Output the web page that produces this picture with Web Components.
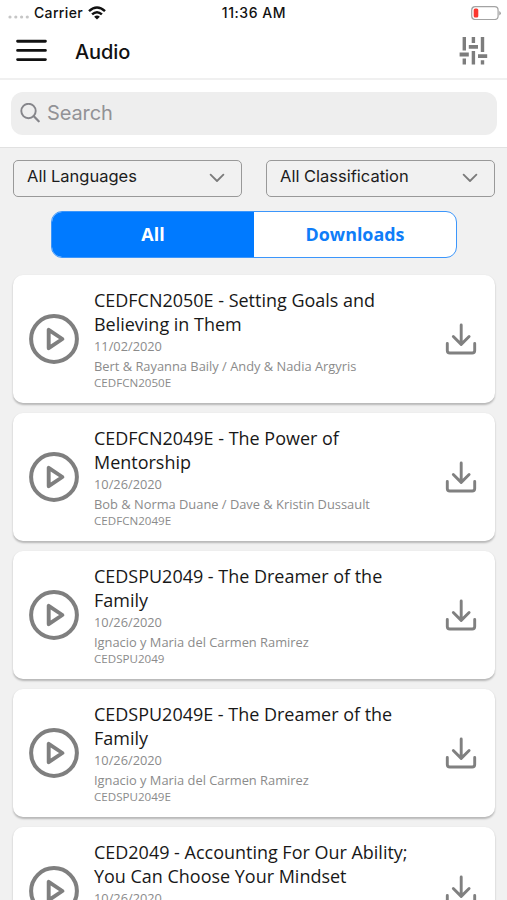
<!DOCTYPE html>
<html lang="en">
<head>
<meta charset="utf-8">
<title>Audio</title>
<style>
  html, body {
    margin: 0;
    height: 100%;
    overflow: hidden;
    background: #f1f1f1;
  }
</style>
</head>
<body>
<audio-app></audio-app>

<script>
function define(name, html) {
  const template = document.createElement('template');
  template.innerHTML = html;

  customElements.define(name, class extends HTMLElement {
    constructor() {
      super();
      this.attachShadow({mode: 'open'});
      this.shadowRoot.appendChild(template.content.cloneNode(true));
    }
  });
}

define('status-bar', `
<style>
  :host {
    display: grid;
    grid-template-columns: 1fr auto 1fr;
    align-items: center;
    height: 26px;
    padding: 0 6px 0 8px;
    font: 500 14px/26px Inter, sans-serif;
    color: #111;
  }
  .left { display: flex; align-items: center; }
  .carrier { margin: 0 5px 0 5px; letter-spacing: 0.35px; }
  .time { letter-spacing: 0.55px; margin-right: 1px; }
  .battery { justify-self: end; }
  svg { display: block; }
</style>
<div class="left">
  <svg width="21" height="16" fill="#c6c6c6">
    <circle cx="2" cy="12" r="1.6"/><circle cx="7.8" cy="12" r="1.6"/>
    <circle cx="13.6" cy="12" r="1.6"/><circle cx="19.3" cy="12" r="1.6"/>
  </svg>
  <span class="carrier">Carrier</span>
  <svg width="18" height="14" viewBox="0 0 18 14" fill="none" stroke="#111" stroke-width="2.5">
    <path d="M1 5.1Q9-2 17 5.1M4.1 8.4Q9 4 13.9 8.4"/>
    <path d="M9 13.6L6.1 10.7Q9 8.4 11.9 10.7Z" fill="#111" stroke="none"/>
  </svg>
</div>
<span class="time">11:36 AM</span>
<svg class="battery" width="30" height="14" viewBox="0 0 30 14">
  <rect x=".7" y=".7" width="26.4" height="12.8" rx="3.5" fill="#fff" stroke="#a3a3a3" stroke-width="1.2"/>
  <rect x="2.7" y="2.5" width="4.6" height="9" rx="1.5" fill="#fb3830"/>
  <path d="M28.3 5v4.5q1.5-.6 1.5-2.2T28.3 5" fill="#999"/>
</svg>
`);

define('nav-bar', `
<style>
  :host {
    display: flex;
    align-items: center;
    height: 52px;
    padding: 0 19px 0 16px;
    border-bottom: 2px solid #f0f0f0;
    font: 500 20px/52px Inter, sans-serif;
    color: #111;
  }
  .title { flex: 1; margin-left: 28px; letter-spacing: -0.1px; }
  svg { display: block; }
  .menu { margin-top: -2px; }
  .tune { margin-top: -2px; }
</style>
<svg class="menu" width="31" height="24" stroke="#111" stroke-width="2.9" stroke-linecap="round">
  <path d="M1.6 2.2h27.8M1.6 11.4h27.8M1.6 20.6h27.8"/>
</svg>
<span class="title"><slot></slot></span>
<svg class="tune" width="29" height="28" viewBox="0 0 29 28" stroke="#7d7d7d" stroke-width="3.4" fill="none">
  <path d="M5.3 0v13.5M5.3 21.5v6M14.4 0v6M14.4 14v13.5M23.5 0v15M23.5 23.3v4.2"/>
  <path d="M.6 17.5h9.2M9.8 9.9h9.2M19 19.2h9.2" stroke-width="3.8"/>
</svg>
`);

define('search-bar', `
<style>
  :host {
    display: block;
    padding: 11.5px 10px 11.5px 11px;
    background: #fff;
    border-bottom: 1px solid #e1e1e1;
  }
  .field {
    display: flex;
    align-items: center;
    height: 43.5px;
    padding-left: 9px;
    border-radius: 12px;
    background: #eee;
    font: 400 20px/43px Inter, sans-serif;
    color: #929296;
  }
  .label { margin-left: 7px; letter-spacing: -0.1px; }
</style>
<div class="field">
  <svg width="20" height="20" viewBox="0 0 20 20" fill="none" stroke="#85858a" stroke-width="1.9" stroke-linecap="round">
    <circle cx="8.5" cy="8" r="7.2"/><path d="M13.6 13.1L18.7 18.3" stroke-width="2.2"/>
  </svg>
  <span class="label"><slot></slot></span>
</div>
`);

define('select-box', `
<style>
  :host {
    display: flex;
    flex: 1;
    justify-content: space-between;
    box-sizing: border-box;
    height: 37px;
    padding: 0 16px 0 13px;
    border: 1.5px solid #999;
    border-radius: 5px;
    font: 400 16.5px/31px Inter, sans-serif;
    color: #1c1c1c;
  }
  svg { margin-top: 12px; }
</style>
<span><slot></slot></span>
<svg width="16" height="10" fill="none" stroke="#7b7b7b" stroke-width="1.8" stroke-linecap="round" stroke-linejoin="round">
  <path d="M1.6 1.6L8 8L14.4 1.6"/>
</svg>
`);

define('segment-control', `
<style>
  :host {
    display: grid;
    grid-template-columns: 1fr 1fr;
    box-sizing: border-box;
    height: 47px;
    margin: 14px 50px 17.5px 51px;
    border: 1.5px solid #3c96fb;
    border-radius: 11px;
    overflow: hidden;
    background: #fff;
    color: #0f7df8;
    font: 700 17.9px/44px "Open Sans", sans-serif;
    text-align: center;
  }
  .active { background: #007aff; color: #fff; }
</style>
<div class="active"><slot name="active"></slot></div>
<div><slot></slot></div>
`);

define('audio-card', `
<style>
  :host {
    display: flex;
    align-items: flex-start;
    box-sizing: border-box;
    height: 128px;
    padding: 13px 18px 0 16px;
    border-radius: 10px;
    background: #fff;
    box-shadow: 0 1.5px 2px rgba(0, 0, 0, 0.24);
    font-family: "Open Sans", sans-serif;
    color: #8b8b8b;
  }
  .text { flex: 1; margin: 0 15px 0 15px; }
  .title { font-size: 17.98px; line-height: 24px; color: #181818; }
  .date { font-size: 12.8px; line-height: 20px; }
  .speakers { font-size: 12.87px; line-height: 20px; }
  .code { font-size: 11.6px; line-height: 14px; }
  svg { display: block; flex: none; }
  .play { margin-top: 26px; }
  .download { margin-top: 35px; }
</style>
<svg class="play" width="50" height="50" fill="none" stroke="#7f7f7f">
  <circle cx="25" cy="25" r="22.9" stroke-width="4"/>
  <path d="M19.7 15.8V34.2L33.4 25Z" stroke-width="3.9" stroke-linejoin="round"/>
</svg>
<div class="text">
  <div class="title"><slot name="title"></slot></div>
  <div class="date"><slot name="date"></slot></div>
  <div class="speakers"><slot name="speakers"></slot></div>
  <div class="code"><slot name="code"></slot></div>
</div>
<svg class="download" width="32" height="32" fill="none" stroke="#808080" stroke-width="2.9" stroke-linecap="round" stroke-linejoin="round">
  <path d="M16.2 2V21.2M8.3 13.5L16.2 21.4L24.1 13.5"/>
  <path d="M2.3 20.5V27.5Q2.3 30 4.8 30H27.2Q29.7 30 29.7 27.5V20.5"/>
</svg>
`);

define('audio-app', `
<style>
  :host { display: block; height: 100vh; overflow: hidden; background: #f1f1f1; }
  header { background: #fff; }
  .filters { display: flex; gap: 24px; padding: 12px 12px 0 13px; }
  .list { display: grid; gap: 10px; padding: 0 12px 0 13px; }
</style>
<header>
  <status-bar></status-bar>
  <nav-bar>Audio</nav-bar>
</header>
<search-bar>Search</search-bar>
<div class="filters">
  <select-box>All Languages</select-box>
  <select-box>All Classification</select-box>
</div>
<segment-control>
  <span slot="active">All</span>
  Downloads
</segment-control>
<div class="list">
  <audio-card>
    <span slot="title">CEDFCN2050E - Setting Goals and Believing in Them</span>
    <span slot="date">11/02/2020</span>
    <span slot="speakers">Bert &amp; Rayanna Baily / Andy &amp; Nadia Argyris</span>
    <span slot="code">CEDFCN2050E</span>
  </audio-card>
  <audio-card>
    <span slot="title">CEDFCN2049E - The Power of Mentorship</span>
    <span slot="date">10/26/2020</span>
    <span slot="speakers">Bob &amp; Norma Duane / Dave &amp; Kristin Dussault</span>
    <span slot="code">CEDFCN2049E</span>
  </audio-card>
  <audio-card>
    <span slot="title">CEDSPU2049 - The Dreamer of the Family</span>
    <span slot="date">10/26/2020</span>
    <span slot="speakers">Ignacio y Maria del Carmen Ramirez</span>
    <span slot="code">CEDSPU2049</span>
  </audio-card>
  <audio-card>
    <span slot="title">CEDSPU2049E - The Dreamer of the Family</span>
    <span slot="date">10/26/2020</span>
    <span slot="speakers">Ignacio y Maria del Carmen Ramirez</span>
    <span slot="code">CEDSPU2049E</span>
  </audio-card>
  <audio-card>
    <span slot="title">CED2049 - Accounting For Our Ability; You Can Choose Your Mindset</span>
    <span slot="date">10/26/2020</span>
  </audio-card>
</div>
`);
</script>
</body>
</html>
